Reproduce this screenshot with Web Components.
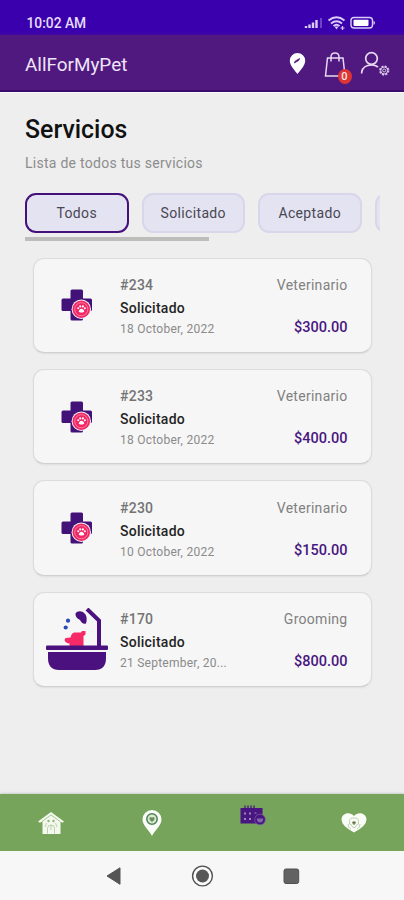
<!DOCTYPE html>
<html lang="es">
<head>
<meta charset="utf-8">
<title>AllForMyPet</title>
<style>
html,body{margin:0;height:100%;background:#eee}
body{font-family:Roboto,"Liberation Sans",sans-serif;overflow:hidden}
</style>
</head>
<body>
<pet-app></pet-app>
<script>
const define = (name, html) => customElements.define(name, class extends HTMLElement {
  constructor() {
    super();
    const t = document.createElement('template');
    t.innerHTML = html;
    this.attachShadow({mode: 'open'}).append(t.content.cloneNode(true));
  }
});

define('status-bar', `<style>
:host{display:flex;height:35px;box-sizing:border-box;padding:10px 27px 0 26.5px;align-items:center;justify-content:space-between;background:linear-gradient(#3b00ae 0 32px,#4308a3);color:#e6dcfb;font-weight:500;font-size:13.8px}
svg{display:block}</style>
<span>10:02 AM</span>
<svg width="74" height="16" viewBox="303 15 74 16" fill="none" stroke="#d9ccf7">
<g stroke-width="2.400"><path d="M306 28v-2M309.500 28v-3.500M313 28v-5.500M316.500 28v-8"/><path d="M321 28v-10" stroke-width="1" opacity=".65"/></g>
<path d="M328.500 20.500q8-6.500 16 0M331 23.500q5.500-4.500 11 0M333.500 26q3-2.500 6 0" stroke-width="1.900"/><path d="m334.500 26.500 2 3 2-3z" fill="#d9ccf7" stroke="none"/><path d="M340.500 28h4m-2-2v4" stroke-width="1.200"/>
<rect x="351" y="17.500" width="21.500" height="10.500" rx="3" stroke-width="1.400"/><rect x="353.500" y="19.700" width="15" height="6.200" rx=".8" fill="#fff" stroke="none"/><path d="M373.500 20.500q3 2.300 0 4.600z" fill="#d9ccf7" stroke="none"/>
</svg>`);

define('app-header', `<style>
:host{display:flex;height:57px;box-sizing:border-box;padding:3px 13.5px 0 25px;align-items:center;justify-content:space-between;background:#50197f;border-bottom:2px solid #3c0c6c;color:#eee5f7;font-size:18.9px}
.actions{position:relative;height:40px;width:106px}
svg{display:block}
b{position:absolute;left:53px;top:24.5px;width:14px;height:15px;border-radius:50%;background:#dd3535;color:#ffe9e6;font-size:11px;font-weight:500;line-height:15px;text-align:center}
</style><span>AllForMyPet</span>
<div class="actions"><svg width="106" height="40" viewBox="285 43.500 106 40" fill="none" stroke="#e7d9f3" stroke-width="1.500">
<path d="M297.500 73.500c-3-4-7.700-8.300-7.700-13.200a7.700 7.700 0 0 1 15.400 0c0 4.900-4.700 9.200-7.700 13.200z" fill="#fff" stroke="none"/><path d="m294.300 62.500 1-2 4.400-2.500-1 2z" fill="#50197f" stroke="#50197f" stroke-width=".8"/>
<path d="M327.500 57.500h15.500l2 18h-19.500zM331 61v-4.500c0-5.300 8-5.300 8 0V61"/>
<circle cx="371.500" cy="58" r="5.800" stroke-width="1.700"/><path d="M361.700 73v-1.500c1-4.500 5-7 9.800-7q4 0 6.500 2" stroke-width="1.700"/>
<circle cx="384.200" cy="70" r="4.200" stroke-width="1.900" stroke-dasharray="2 1.300" opacity=".85"/><circle cx="384.200" cy="70" r="3.500" stroke-width=".9"/><circle cx="384.200" cy="70" r="1.500" stroke-width=".9"/>
</svg><b>0</b></div>`);

define('filter-chip', `<style>
:host{display:flex;flex:none;width:103.500px;height:40px;box-sizing:border-box;border:2px solid #d9d6ea;border-radius:11px;background:#e4e3f2;color:#494752;font-size:14px;letter-spacing:.35px;align-items:center;justify-content:center}
:host([active]){border-color:#44107a}
</style><slot></slot>`);

define('filter-row', `<style>
:host{display:block;width:354.500px;margin-left:25px;overflow:hidden}
.row{display:flex;gap:13px}
.bar{height:4px;width:184px;margin-top:4px;background:#bdbdbb}
</style><div class="row"><slot></slot></div><div class="bar"></div>`);

define('vet-icon', `<style>:host{display:block}svg{display:block}</style>
<svg width="62" height="62" viewBox="0 0 62 62"><path d="M24.500 17q0-1.500 1.500-1.500h9.500q1.500 0 1.500 1.500v7.500h7.500q1.500 0 1.500 1.500v9.500q0 1.500-1.500 1.500H37v8q0 1.500-1.500 1.500H26q-1.500 0-1.500-1.500v-8h-7.500q-1.500 0-1.500-1.500V26q0-1.500 1.500-1.500h7.500z" fill="#421279"/>
<circle cx="35.300" cy="35.200" r="9.700" fill="#f4f2f5"/><circle cx="35.300" cy="35.200" r="8.700" fill="#f12664"/><circle cx="35.300" cy="35.200" r="6.600" fill="none" stroke="#ffa2bb" stroke-width=".7"/>
<g fill="#fff"><path d="M35.500 34.700c1.600 0 3 2 2.700 3-.4 1.100-4.900 1.100-5.400 0-.3-1 1.100-3 2.700-3z"/><circle cx="32.200" cy="34.300" r="1"/><circle cx="34.200" cy="32.400" r="1.100"/><circle cx="36.900" cy="32.400" r="1.100"/><circle cx="38.900" cy="34.300" r="1"/></g></svg>`);

define('bath-icon', `<style>:host{display:block}svg{display:block}</style>
<svg width="62" height="62" viewBox="0 0 62 62"><path d="M41 1 53 12.500V40" fill="none" stroke="#4b117f" stroke-width="4"/>
<path d="M29.500 5.500c2-3.500 7.500-3 10 1 1.500 2.500 1.500 6 .5 9-2.500 1-4.500-.5-6-3.500-3-1.500-5-4-4.500-6.500z" fill="#4b117f"/>
<circle cx="22" cy="12.700" r="2.100" fill="#2a4ab8"/><circle cx="19.700" cy="19.500" r="2.100" fill="#2a4ab8"/>
<path d="M23.500 38.500v-3c-2.500 0-4.500-1.200-5-3.500l1-2 5-.5c1-4 2.500-5.500 5.500-5h5l1-1.500h3.500v3.500l-2 1.500v10.500z" fill="#f52a67"/>
<rect y="37.500" width="62" height="4.500" rx="1" fill="#4b117f"/><path d="M2 44h58V50q0 12-11 12H13Q2 62 2 50z" fill="#4b117f"/></svg>`);

define('service-card', `<style>
:host{display:grid;grid-template-columns:62px 1fr auto;column-gap:12px;width:338.500px;height:95.400px;box-sizing:border-box;border:1.500px solid #dcdcdc;border-bottom-color:#d0d0d0;border-radius:11px;background:#f6f6f6;padding:0 23px 0 12px;box-shadow:0 1px 2px #0001}
.pic{align-self:center;display:block}
.info{display:flex;flex-direction:column;padding-top:15.300px;color:#8a8a8a;font-size:12px;letter-spacing:.25px}
.id,.state,.date{display:block;white-space:nowrap}
.id{height:23px;line-height:23px;font-size:14px;letter-spacing:.25px;color:#737373;font-weight:500}
.state{height:23px;line-height:23px;font-size:14px;letter-spacing:.25px;font-weight:500;color:#242424}
.date{line-height:18px}
.side{display:flex;flex-direction:column;align-items:flex-end;padding-top:15.300px;font-size:14px;color:#818181;letter-spacing:.28px}
.kind,.price{height:23px;line-height:23px}
.price{margin-top:19px;font-weight:500;color:#481680;font-size:14.500px;letter-spacing:0}
</style><div class="pic"><slot name="icon"></slot></div>
<div class="info"><slot class="id" name="id"></slot><slot class="state" name="state"></slot><slot class="date" name="date"></slot></div>
<div class="side"><slot class="kind" name="kind" style="display:block"></slot><slot class="price" name="price" style="display:block"></slot></div>`);

define('bottom-tabs', `<style>
:host{display:grid;grid-template-columns:repeat(4,1fr);height:57px;background:#76a45b;box-shadow:0 -1px 2px #0002;justify-items:center;align-items:center}
svg{display:block}.on{transform:translateY(-8px)}
</style>
<svg width="26" height="26" viewBox="0 0 26 26"><path d="M0 11.500 13 2l13 9.500-1.500 1.200-2-1.300V24h-18V11.400l-2.800 1.300z" fill="#f4f8ef"/><path d="M4 11.500 13 5l9 6.500" fill="none" stroke="#76a45b" stroke-width=".6"/><g fill="#91b57b"><circle cx="10.500" cy="11" r="1.200"/><circle cx="15.500" cy="11" r="1.200"/></g><path d="M9.500 23.500v-5q0-3.500 3.500-3.500t3.500 3.500v5M13 15v5m-4.500-7-1.500 4m10.500-4 1.500 4" fill="none" stroke="#a9c698" stroke-width=".8"/></svg>
<svg width="22" height="28" viewBox="0 0 22 28"><path d="M11 27C8 21 1.500 16.500 1.500 10.500a9.500 9.500 0 0 1 19 0C20.500 16.500 14 21 11 27z" fill="#fafcf7"/><circle cx="11" cy="10" r="5.200" fill="#dce9d5" stroke="#4f8052" stroke-width="1.500"/><path d="M11 13q-3.500-2.500-2.300-4.500 1.300-1.200 2.300.5 1-1.700 2.300-.5Q14.500 10.500 11 13z" fill="#69915e"/></svg>
<svg class="on" width="26" height="22" viewBox="0 0 26 22"><path d="M.500 4h22v15.500H.500z" fill="#481581"/><path d="M5 1.500v4m3-4v4m3-4v4m3-4v4" stroke="#481581" stroke-width="1.300"/><g fill="#9d86bc"><path d="M4 8.500h2v2H4zM9 8.500h2v2H9zM4 14h2v2H4zM9 14h2v2H9zM14.500 8.500h2v1h-2z"/></g><circle cx="20" cy="15.500" r="5.300" fill="#481581" stroke="#7959a0" stroke-width=".8"/><path d="M16.800 14.500h6.500q-.3 4-3.300 4t-3.200-4z" fill="#8268ab"/></svg>
<svg width="26" height="24" viewBox="0 0 26 24"><path d="M13 21.500Q.5 15 .5 8.500C.5 2 9 0 13 5 17 0 25.500 2 25.500 8.500q0 6.500-12.500 13z" fill="#fafcf7"/><path d="M8.500 9.500q1-3 3.500-2.500h2q2.500-.5 3.500 2.500v3.500q-2 0-2.500 2.500-2 2.500-4 0Q10.500 13 8.500 13zM7 13q0 4 3 5m9-5q0 4-3 5" fill="none" stroke="#a4bf93" stroke-width=".7"/><path d="M11 11q2-1.500 4 0-.5 3-2 3t-2-3z" fill="#759465"/><circle cx="13" cy="11.500" r=".8" fill="#824e38"/></svg>`);

define('system-nav', `<style>:host{display:block;height:49px;background:#f7f7f7}svg{display:block;width:100%;height:49px}</style>
<svg viewBox="0 851 404 49"><path d="M107 876 120 867.800v16.500z" fill="#555" stroke="#555" stroke-linejoin="round"/><circle cx="202.500" cy="876" r="9.900" fill="#fafafa" stroke="#505050" stroke-width="1.400"/><circle cx="202.500" cy="876" r="6.500" fill="#575757"/><rect x="284" y="869" width="14.700" height="14.500" rx="2" fill="#626262" stroke="#505050"/></svg>`);

const services = [
  ['vet', '#234', '18 October, 2022', 'Veterinario', '$300.00'],
  ['vet', '#233', '18 October, 2022', 'Veterinario', '$400.00'],
  ['vet', '#230', '10 October, 2022', 'Veterinario', '$150.00'],
  ['bath', '#170', '21 September, 20...', 'Grooming', '$800.00']
];

define('pet-app', `<style>
:host{display:flex;flex-direction:column;height:900px;width:404px;background:#eee}
main{flex:1;min-height:0;border-top:1px solid #fafafa;box-sizing:border-box}
h1{margin:21px 0 0 25px;font-size:24.900px;line-height:32px;font-weight:500;color:#111}
p{margin:7px 0 20px 25px;font-size:14px;line-height:20px;letter-spacing:.27px;color:#8c8c8c}
.list{display:flex;flex-direction:column;gap:16px;margin:16.500px 0 0 33px}
</style>
<status-bar></status-bar><app-header></app-header>
<main><h1>Servicios</h1><p>Lista de todos tus servicios</p>
<filter-row><filter-chip active>Todos</filter-chip><filter-chip>Solicitado</filter-chip><filter-chip>Aceptado</filter-chip><filter-chip></filter-chip></filter-row>
<div class="list">${services.map(([i, id, d, k, p]) => `<service-card><${i}-icon slot="icon"></${i}-icon><span slot="id">${id}</span><span slot="state">Solicitado</span><span slot="date">${d}</span><span slot="kind">${k}</span><span slot="price">${p}</span></service-card>`).join('')}</div></main>
<bottom-tabs></bottom-tabs><system-nav></system-nav>`);
</script>
</body>
</html>
